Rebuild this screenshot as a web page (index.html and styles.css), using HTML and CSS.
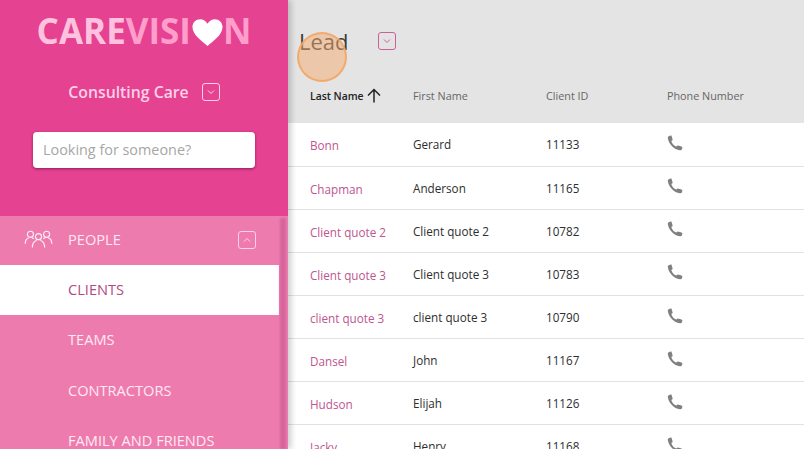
FILE: index.html
```html
<!DOCTYPE html>
<html lang="en">
<head>
    <meta charset="UTF-8">
    <meta name="viewport" content="width=device-width, initial-scale=1.0">
    <title>Clients</title>
    <link rel="stylesheet" href="styles.css">
</head>
<body>

<svg class="icon-defs" aria-hidden="true">
    <symbol id="phone" viewBox="0 0 16 16">
        <path d="M1.2 1.4 4.2 0.3C4.9 1.6 5.4 3.2 5.7 4.9L4.3 5.9C5 8.6 6.8 10.5 9.4 11.6L10.6 10.4C12.2 10.6 13.9 11.1 15.4 11.9L15 14.3C14.7 15.2 13.9 15.5 12.8 15.3 7 14.2 2 9.2 0.9 3.4 0.7 2.5 0.8 1.9 1.2 1.4Z"/>
    </symbol>
</svg>

<div class="app">
    <aside class="sidebar">
        <div class="brand">
            <div class="logo"><span class="logo-care">CARE</span><span class="logo-vision">VISI</span><svg class="logo-heart" viewBox="0 0 32 28"><path d="M16 28C10 23 0.4 16.5 0.4 8.4 0.4 3.6 4 0.2 8.4 0.2 11.6 0.2 14.4 2 16 5 17.6 2 20.4 0.2 23.6 0.2 28 0.2 31.6 3.6 31.6 8.4 31.6 16.5 22 23 16 28Z"/></svg><span class="logo-vision">N</span></div>
            <div class="org">
                <span>Consulting Care</span>
                <span class="chev-box"><svg viewBox="0 0 16 16"><path d="M5 6.5 8 9.5 11 6.5"/></svg></span>
            </div>
            <input class="search" type="text" placeholder="Looking for someone?">
        </div>
        <nav class="nav">
            <div class="nav-list">
                <div class="nav-head">
                    <svg class="people-icon" viewBox="0 0 30 20">
                        <circle cx="6.5" cy="4.5" r="3.2"/>
                        <path d="M1 14.5C1 10.5 3 8.8 4.8 8.2M8.2 8.2C9 8.5 9.5 8.9 10 9.4"/>
                        <circle cx="23.5" cy="4.5" r="3.2"/>
                        <path d="M29 14.5C29 10.5 27 8.8 25.2 8.2M21.8 8.2C21 8.5 20.5 8.9 20 9.4"/>
                        <circle cx="15" cy="7" r="3.2"/>
                        <path d="M8.5 18.5C8.5 14 10.8 11.5 13 10.7M17 10.7C19.2 11.5 21.5 14 21.5 18.5"/>
                    </svg>
                    <span class="nav-head-label">PEOPLE</span>
                    <span class="chev-box"><svg viewBox="0 0 16 16"><path d="M5 9.5 8 6.5 11 9.5"/></svg></span>
                </div>
                <a class="nav-item active">CLIENTS</a>
                <a class="nav-item">TEAMS</a>
                <a class="nav-item">CONTRACTORS</a>
                <a class="nav-item">FAMILY AND FRIENDS</a>
            </div>
            <div class="nav-scroll"></div>
        </nav>
    </aside>

    <main class="main">
        <div class="title-row">
            <h1>Lead</h1>
            <span class="chev-box dark"><svg viewBox="0 0 16 16"><path d="M5 6.5 8 9.5 11 6.5"/></svg></span>
        </div>
        <div class="row head-row">
            <div class="sorted">Last Name <svg class="sort-arrow" viewBox="0 0 14 14"><path d="M7 14V1M1 7 7 1 13 7"/></svg></div>
            <div>First Name</div>
            <div>Client ID</div>
            <div>Phone Number</div>
        </div>
        <div class="row"><div class="last">Bonn</div><div>Gerard</div><div>11133</div><svg class="phone"><use href="#phone"/></svg></div>
        <div class="row"><div class="last">Chapman</div><div>Anderson</div><div>11165</div><svg class="phone"><use href="#phone"/></svg></div>
        <div class="row"><div class="last">Client quote 2</div><div>Client quote 2</div><div>10782</div><svg class="phone"><use href="#phone"/></svg></div>
        <div class="row"><div class="last">Client quote 3</div><div>Client quote 3</div><div>10783</div><svg class="phone"><use href="#phone"/></svg></div>
        <div class="row"><div class="last">client quote 3</div><div>client quote 3</div><div>10790</div><svg class="phone"><use href="#phone"/></svg></div>
        <div class="row"><div class="last">Dansel</div><div>John</div><div>11167</div><svg class="phone"><use href="#phone"/></svg></div>
        <div class="row"><div class="last">Hudson</div><div>Elijah</div><div>11126</div><svg class="phone"><use href="#phone"/></svg></div>
        <div class="row"><div class="last">Jacky</div><div>Henry</div><div>11168</div><svg class="phone"><use href="#phone"/></svg></div>
    </main>
</div>

<div class="click-marker"></div>

</body>
</html>
```

FILE: styles.css
```css
html, body { margin: 0; height: 100%; overflow: hidden; }
body { font-family: "Open Sans", sans-serif; background-color: #fff; color: #333; }
.icon-defs { display: none; }

.app { display: flex; height: 449px; overflow: hidden; }

/* sidebar */
.sidebar { width: 288px; flex: none; display: flex; flex-direction: column; position: relative; z-index: 1; box-shadow: 3px 0 6px rgba(0,0,0,0.2); }
.brand { height: 216px; flex: none; box-sizing: border-box; padding: 12px 33px 0; background-color: #e54292; }
.logo { display: flex; align-items: center; justify-content: center; height: 38px; font-size: 35px; font-weight: 700; line-height: 38px; white-space: nowrap; }
.logo-care { color: #ffc2de; }
.logo-vision { color: #ff9ecb; }
.logo-heart { width: 31px; height: 27px; fill: #fff; margin: 2px 0 0 1px; flex: none; }
.org { display: flex; align-items: center; justify-content: center; gap: 13px; margin-top: 30px; color: #ffd0e6; font-size: 15.8px; font-weight: 600; line-height: 24px; }
.chev-box { display: flex; width: 16px; height: 16px; border: 1px solid #ffd0e6; border-radius: 3px; }
.chev-box svg { width: 16px; height: 16px; fill: none; stroke: #ffd9eb; stroke-width: 1; }
.search { display: block; box-sizing: border-box; width: 222px; height: 36px; margin-top: 28px; padding: 0 10px 2px; border: none; border-radius: 4px; background-color: #fff; box-shadow: 0 1px 3px rgba(90,0,50,0.6); font-family: "Open Sans", sans-serif; font-size: 14.4px; }
.search::placeholder { color: #a6a6a6; opacity: 1; }

.nav { flex: 1; display: flex; background-color: #ee7bae; overflow: hidden; }
.nav-list { width: 279px; flex: none; }
.nav-scroll { flex: 1; margin: 2px 2px 0 1px; background-color: #d5669c; filter: blur(1px); }
.nav-head { display: flex; align-items: center; height: 49px; box-sizing: border-box; padding: 0 0 2px 24px; color: #ffe9f3; font-size: 14.6px; }
.nav-head-label { margin-bottom: 2px; }
.nav-head .chev-box { margin-left: auto; margin-right: 23px; }
.people-icon { width: 29px; height: 19px; margin-right: 15px; fill: none; stroke: #fff0f7; stroke-width: 1.2; }
.nav-item { display: block; height: 50.4px; padding-left: 68px; color: #ffe9f3; font-size: 14.6px; line-height: 48.4px; white-space: nowrap; }
.nav-item.active { background-color: #fff; color: #b04a82; }

/* main */
.main { flex: 1; min-width: 0; background-color: #fff; }
.title-row { display: flex; align-items: center; gap: 29px; height: 68px; box-sizing: border-box; padding: 26px 0 13px 11px; background-color: #e4e4e4; }
.title-row h1 { margin: 2px 0 0; font-size: 22px; font-weight: 400; line-height: 29px; color: #3c3c3c; }
.chev-box.dark { border-color: #c9609a; }
.chev-box.dark svg { stroke: #c9609a; }

.row { display: grid; grid-template-columns: 103px 133px 121px 1fr; align-items: center; height: 43.15px; box-sizing: border-box; padding-left: 22px; border-bottom: 1px solid #e2e2e2; color: #2e2e2e; font-size: 11.7px; line-height: 16px; }
.head-row { height: 55.4px; background-color: #e4e4e4; border-bottom: none; color: #666; font-size: 10.8px; }
.head-row .sorted { display: flex; align-items: center; gap: 3px; color: #222; font-weight: 600; font-size: 10.4px; white-space: nowrap; }
.sort-arrow { width: 14px; height: 15px; fill: none; stroke: #222; stroke-width: 1.5; }
.last { color: #bd5690; padding-top: 2px; }
.phone { display: block; width: 16px; height: 16px; fill: #808080; margin: 0 0 3px 0; }

/* click marker from the recording */
.click-marker { position: absolute; left: 297px; top: 32px; width: 50px; height: 50px; box-sizing: border-box; border: 2px solid rgba(243,166,98,0.85); border-radius: 50%; background-color: rgba(245,170,110,0.5); z-index: 2; }
```
